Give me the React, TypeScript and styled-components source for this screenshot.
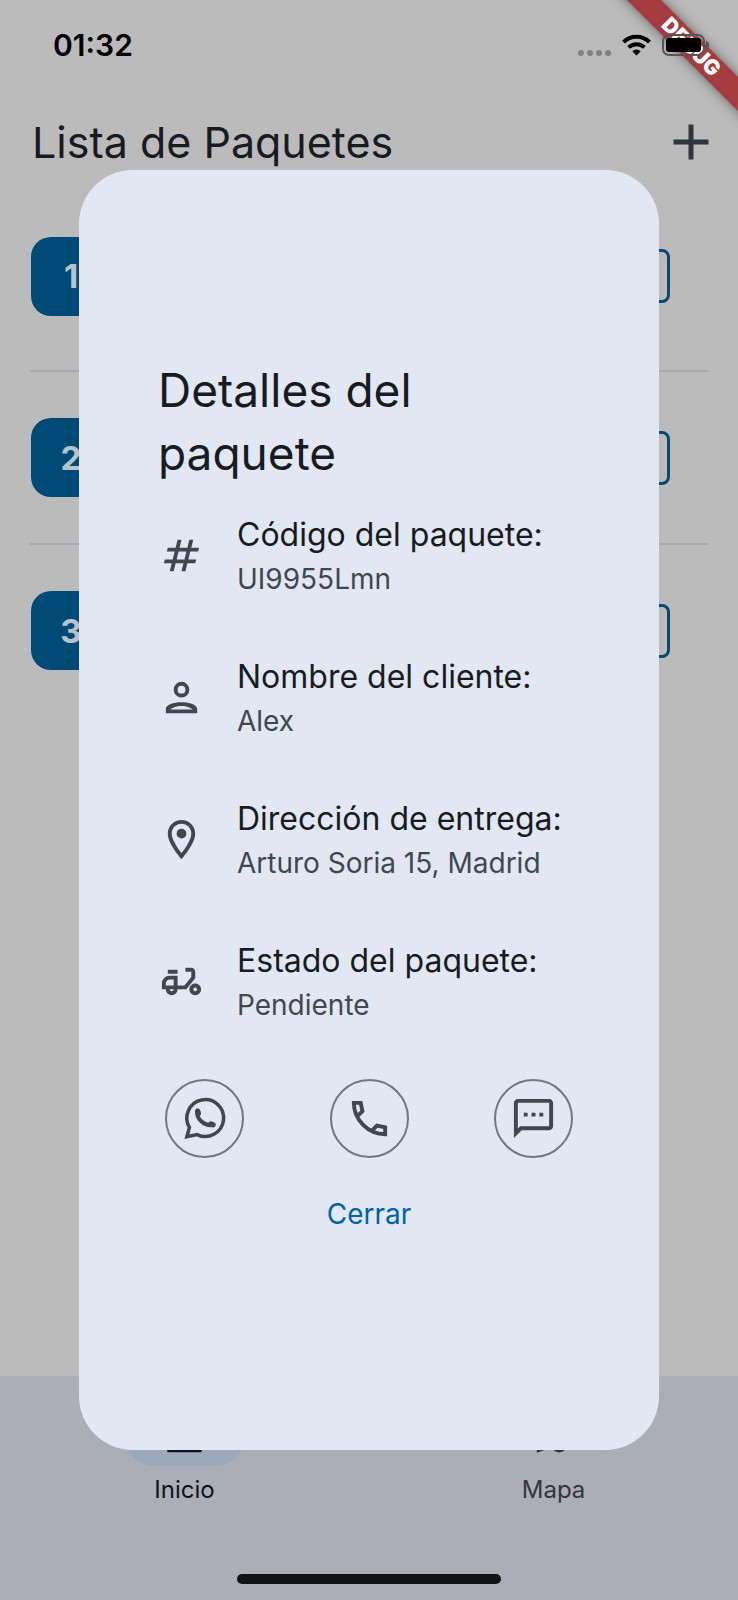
import React from 'react';
import styled, { createGlobalStyle } from 'styled-components';
import { MdAdd, MdOutlineDeliveryDining, MdOutlineLocationOn, MdOutlineSms } from 'react-icons/md';

const GlobalStyle = createGlobalStyle`
  *, *::before, *::after { box-sizing: border-box; }
  body {
    margin: 0;
    background: #bbbbbc;
    color: #181b1f;
    font-family: Inter, Roboto, "Noto Sans", sans-serif;
  }
  button { font: inherit; cursor: pointer; }
  h1, h2, p, ul { margin: 0; padding: 0; }
`;

const Screen = styled.div`
  position: relative;
  display: flex;
  flex-direction: column;
  min-height: 100vh;
  overflow: hidden;
`;

const StatusBar = styled.div`
  display: flex;
  align-items: center;
  justify-content: space-between;
  height: 97px;
  padding: 0 28px 7px 53px;
`;

const Clock = styled.time`
  color: #000;
  font-size: 30px;
  font-weight: 600;
`;

const StatusIcons = styled.div`
  position: relative;
  z-index: 4;
  display: flex;
  align-items: center;
  gap: 11px;
`;

const AppBar = styled.header`
  display: flex;
  align-items: center;
  justify-content: space-between;
  height: 90px;
  padding: 0 17px 0 32px;
`;

const PageTitle = styled.h1`
  font-size: 43px;
  font-weight: 400;
`;

const AddButton = styled.button`
  display: flex;
  padding: 0;
  border: 0;
  background: none;
  color: #31353b;
`;

const PackageList = styled.ul`
  flex: 1;
  padding: 0 30px;
  list-style: none;
`;

const PackageRow = styled.li`
  display: flex;
  align-items: center;
  justify-content: space-between;
  height: 173px;
  padding: 0 38px 0 1px;
  border-bottom: 2px solid #a9a9ab;

  &:first-child {
    height: 185px;
    padding-bottom: 5px;
  }

  &:last-child { border-bottom-color: transparent; }
`;

const Chip = styled.span`
  display: flex;
  align-items: center;
  justify-content: center;
  width: 80px;
  height: 79px;
  border-radius: 20px;
  background: #004a78;
  color: #b6c3cd;
  font-size: 33px;
  font-weight: 700;
`;

const StateButton = styled.button`
  width: 54px;
  height: 54px;
  border: 3px solid #064a72;
  border-radius: 8px;
  background: none;
`;

const NavBar = styled.nav`
  display: flex;
  align-items: flex-start;
  height: 224px;
  padding-top: 30px;
  background: #abaeb6;
`;

const NavItem = styled.button<{ $active?: boolean }>`
  display: flex;
  flex: 1;
  flex-direction: column;
  align-items: center;
  gap: 8px;
  padding: 0;
  border: 0;
  background: none;
  color: ${(p) => (p.$active ? '#0c141d' : '#33363e')};
  font-size: 24px;
  line-height: 32px;
`;

const NavPill = styled.span<{ $active?: boolean }>`
  display: flex;
  align-items: center;
  justify-content: center;
  width: 120px;
  height: 60px;
  border-radius: 30px;
  background: ${(p) => (p.$active ? '#9ba9b9' : 'transparent')};
`;

const HomeIndicator = styled.div`
  position: absolute;
  bottom: 16px;
  left: 50%;
  width: 264px;
  height: 10px;
  border-radius: 5px;
  background: #121413;
  transform: translateX(-50%);
`;

const BannerCorner = styled.div`
  position: absolute;
  top: 0;
  right: 0;
  z-index: 3;
  width: 150px;
  height: 150px;
  overflow: hidden;
`;

const Banner = styled.div`
  position: absolute;
  top: 35px;
  right: -63px;
  width: 220px;
  background: #a43c40;
  box-shadow: 0 0 12px rgba(0, 0, 0, 0.5);
  color: #fff;
  font-size: 21px;
  font-weight: 900;
  line-height: 24px;
  text-align: center;
  transform: rotate(45deg);
`;

const Overlay = styled.div`
  position: absolute;
  inset: 0;
  z-index: 2;
  display: flex;
  padding: 170px 79px 150px;
`;

const Dialog = styled.section`
  display: flex;
  flex: 1;
  flex-direction: column;
  justify-content: center;
  padding: 0 79px 18px;
  border-radius: 54px;
  background: #e1e8f4;
`;

const DialogTitle = styled.h2`
  font-size: 46px;
  font-weight: 400;
  line-height: 63px;
`;

const DetailList = styled.ul`
  list-style: none;
`;

const Detail = styled.li`
  display: flex;
  align-items: center;
  gap: 32px;
  height: 142px;
  color: #42474f;
  white-space: nowrap;
`;

const DetailLabel = styled.p`
  color: #181c20;
  font-size: 32px;
  line-height: 46px;
`;

const DetailValue = styled.p`
  font-size: 28px;
  line-height: 42px;
`;

const Actions = styled.div`
  display: flex;
  justify-content: space-between;
  padding: 26px 7px;
`;

const RoundButton = styled.button`
  display: flex;
  align-items: center;
  justify-content: center;
  width: 79px;
  height: 79px;
  padding: 0;
  border: 2px solid #727780;
  border-radius: 50%;
  background: none;
  color: #42474f;
`;

const CloseButton = styled.button`
  align-self: center;
  padding: 0 24px;
  border: 0;
  background: none;
  color: #00629e;
  font-size: 28px;
  line-height: 60px;
`;

type IconProps = { size: number };

const HashIcon = ({ size }: IconProps) => (
  <svg width={size} height={size} viewBox="0 -960 960 960" fill="currentColor" aria-hidden="true">
    <path d="m240-160 40-160H120l20-80h160l40-160H180l20-80h160l40-160h80l-40 160h160l40-160h80l-40 160h160l-20 80H660l-40 160h160l-20 80H600l-40 160h-80l40-160H360l-40 160h-80Zm140-240h160l40-160H420l-40 160Z" />
  </svg>
);

const PersonIcon = ({ size }: IconProps) => (
  <svg width={size} height={size} viewBox="0 0 24 24" fill="currentColor" aria-hidden="true">
    <circle cx="12" cy="8" r="3" fill="none" stroke="currentColor" strokeWidth="2" />
    <path
      fillRule="evenodd"
      d="M4 20v-2.2c0-2.1 3.8-3.4 8-3.4s8 1.3 8 3.4V20zM6.3 18.1h11.4c-.9-.9-3.2-1.8-5.7-1.8s-4.8.9-5.7 1.8z"
    />
  </svg>
);

const WhatsAppIcon = ({ size }: IconProps) => (
  <svg width={size} height={size} viewBox="0 0 24 24" fill="none" stroke="currentColor" aria-hidden="true">
    <path d="M3 21.3l1.3-4.7A9.4 9.4 0 1 1 8.2 20.2z" strokeWidth="1.8" />
    <path d="M8.2 9.2c.2 3.4 4.1 6.6 7.4 6.2" strokeWidth="2" strokeLinecap="round" />
    <ellipse cx="8.7" cy="8.8" rx="1.4" ry="2" fill="currentColor" stroke="none" transform="rotate(-20 8.7 8.8)" />
    <ellipse cx="15.8" cy="15" rx="2" ry="1.4" fill="currentColor" stroke="none" transform="rotate(20 15.8 15)" />
  </svg>
);

const PhoneIcon = ({ size }: IconProps) => (
  <svg width={size} height={size} viewBox="0 0 24 24" fill="none" stroke="currentColor" strokeWidth="2" aria-hidden="true">
    <path d="M5.6 11l2.8-2.8-.9-4.2H4C4 12.7 11.3 20 20 20v-3.5l-4.2-.9-2.8 2.8" />
  </svg>
);

const HomeIcon = ({ size }: IconProps) => (
  <svg width={size} height={size} viewBox="0 0 24 24" fill="none" stroke="currentColor" strokeWidth="2" strokeLinejoin="round" aria-hidden="true">
    <path d="M3.7 19.4V9.5L12 3.5l8.3 6v9.9z" />
  </svg>
);

const MapIcon = ({ size }: IconProps) => (
  <svg width={size} height={size} viewBox="0 0 24 24" fill="none" stroke="currentColor" strokeWidth="1.8" aria-hidden="true">
    <path d="M7 18.3l-3 1.1V6l5-2 6 2 5-2v8" />
    <circle cx="15" cy="16.2" r="3.4" />
  </svg>
);

const details = [
  { icon: HashIcon, label: 'Código del paquete:', value: 'UI9955Lmn' },
  { icon: PersonIcon, label: 'Nombre del cliente:', value: 'Alex' },
  { icon: MdOutlineLocationOn, label: 'Dirección de entrega:', value: 'Arturo Soria 15, Madrid' },
  { icon: MdOutlineDeliveryDining, label: 'Estado del paquete:', value: 'Pendiente' },
];

const actions = [
  { icon: WhatsAppIcon, name: 'WhatsApp' },
  { icon: PhoneIcon, name: 'Llamar' },
  { icon: MdOutlineSms, name: 'Mensaje' },
];

const Signal = () => (
  <svg width="34" height="22" viewBox="0 0 34 22" fill="#818183" aria-hidden="true">
    {[3, 12, 21, 30].map((x) => (
      <circle key={x} cx={x + 1} cy="19" r="3" />
    ))}
  </svg>
);

const Wifi = () => (
  <svg width="29" height="22" viewBox="0 0 29 22" fill="none" stroke="#000" strokeWidth="4" aria-hidden="true">
    <path d="M1.5 8.2a18.4 18.4 0 0 1 26 0" />
    <path d="M6.6 13.4a11.2 11.2 0 0 1 15.8 0" />
    <path d="M14.5 21.5l-4.2-4.2a6 6 0 0 1 8.4 0z" fill="#000" stroke="none" />
  </svg>
);

const Battery = () => (
  <svg width="48" height="22" viewBox="0 0 48 22" aria-hidden="true">
    <rect x="1" y="1" width="41" height="20" rx="6" fill="none" stroke="#5a5254" strokeWidth="2" />
    <rect x="4" y="4" width="35" height="14" rx="3" fill="#000" />
    <path d="M44 7c4 1 4 7 0 8z" fill="#5a5254" />
  </svg>
);

export default function App() {
  return (
    <Screen>
      <GlobalStyle />
      <StatusBar>
        <Clock>01:32</Clock>
        <StatusIcons>
          <Signal />
          <Wifi />
          <Battery />
        </StatusIcons>
      </StatusBar>
      <AppBar>
        <PageTitle>Lista de Paquetes</PageTitle>
        <AddButton aria-label="Añadir paquete">
          <MdAdd size={60} />
        </AddButton>
      </AppBar>
      <PackageList>
        {[1, 2, 3].map((n) => (
          <PackageRow key={n}>
            <Chip>{n}</Chip>
            <StateButton aria-label={`Ver paquete ${n}`} />
          </PackageRow>
        ))}
      </PackageList>
      <NavBar>
        <NavItem $active>
          <NavPill $active>
            <HomeIcon size={45} />
          </NavPill>
          Inicio
        </NavItem>
        <NavItem>
          <NavPill>
            <MapIcon size={45} />
          </NavPill>
          Mapa
        </NavItem>
      </NavBar>
      <HomeIndicator />
      <BannerCorner>
        <Banner>DEBUG</Banner>
      </BannerCorner>
      <Overlay>
        <Dialog role="dialog" aria-modal="true" aria-labelledby="dialog-title">
          <DialogTitle id="dialog-title">Detalles del paquete</DialogTitle>
          <DetailList>
            {details.map(({ icon: Icon, label, value }) => (
              <Detail key={label}>
                <Icon size={47} />
                <div>
                  <DetailLabel>{label}</DetailLabel>
                  <DetailValue>{value}</DetailValue>
                </div>
              </Detail>
            ))}
          </DetailList>
          <Actions>
            {actions.map(({ icon: Icon, name }) => (
              <RoundButton key={name} aria-label={name}>
                <Icon size={47} />
              </RoundButton>
            ))}
          </Actions>
          <CloseButton>Cerrar</CloseButton>
        </Dialog>
      </Overlay>
    </Screen>
  );
}
